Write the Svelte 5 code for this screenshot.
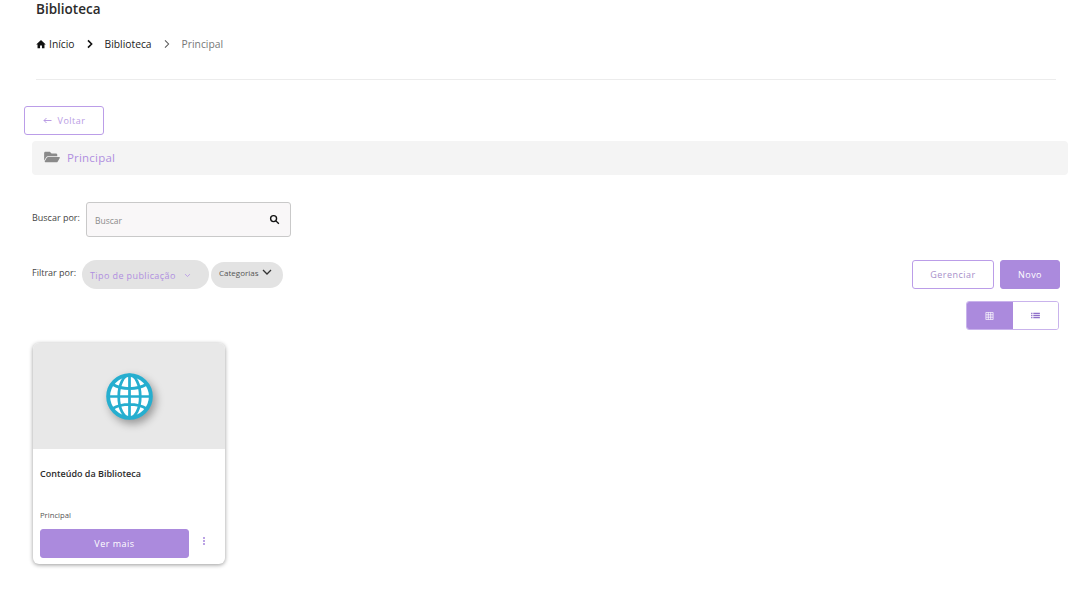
<script lang="ts">
	let search = '';
</script>

<div class="page">
	<header class="top">
		<h1>Biblioteca</h1>
		<nav class="crumbs">
			<svg class="home" viewBox="0 0 24 24"><path d="M12 2.500 0.500 13h3.200v9h6v-6.500h4.600v6.500h6v-9h3.200z" /></svg>
			<span class="crumb first">Início</span>
			<svg class="chev bold" viewBox="0 0 10 12"><path d="M2.500 1.500 7 6l-4.500 4.500" /></svg>
			<span class="crumb">Biblioteca</span>
			<svg class="chev" viewBox="0 0 10 12"><path d="M2.500 1.500 7 6l-4.500 4.500" /></svg>
			<span class="crumb muted">Principal</span>
		</nav>
		<hr />
	</header>

	<button class="btn outline back">
		<svg class="arrow" viewBox="0 0 9 7"><path d="M8.500 3.500H1M3.500 1 1 3.500 3.500 6" /></svg>
		Voltar
	</button>

	<div class="folder-bar">
		<svg class="folder" viewBox="0 0 576 512"><path d="M572.700 292.100 500.300 416.200A64 64 0 0 1 445 448H45c-18.500 0-30.100-20.100-20.800-36.100l72.400-124.100A64 64 0 0 1 151.900 256h400c18.500 0 30.100 20.100 20.800 36.100zM152 224h328v-48c0-26.500-21.500-48-48-48H272l-64-64H48C21.500 64 0 85.500 0 112v278l69.100-118.400C86.200 242.300 118 224 152 224z" /></svg>
		<span>Principal</span>
	</div>

	<div class="search-row">
		<span class="label">Buscar por:</span>
		<div class="search">
			<input placeholder="Buscar" bind:value={search} />
			<svg viewBox="0 0 24 24"><circle cx="10" cy="10" r="6.500" /><path d="m15 15 6.500 6.500" /></svg>
		</div>
	</div>

	<div class="filter-row">
		<span class="label">Filtrar por:</span>
		<div class="pill type">
			Tipo de publicação
			<svg viewBox="0 0 10 6"><path d="m1.500 1 3.500 3.500L8.500 1" /></svg>
		</div>
		<div class="pill cat">
			Categorias
			<svg viewBox="0 0 10 6"><path d="m1 1 4 4 4-4" /></svg>
		</div>
		<div class="actions">
			<button class="btn outline manage">Gerenciar</button>
			<button class="btn solid novo">Novo</button>
		</div>
	</div>

	<div class="toggle-row">
		<div class="toggle">
			<button class="on" aria-label="Grade">
				<svg viewBox="0 0 10 10"><path d="M.500.500h9v9h-9zM3.500.500v9M6.500.500v9M.500 3.500h9M.500 6.500h9" /></svg>
			</button>
			<button aria-label="Lista">
				<svg viewBox="0 0 10 8"><path d="M0 1.500h1.500M0 4h1.500M0 6.500h1.500M2.500 1.500H10M2.500 4H10M2.500 6.500H10" /></svg>
			</button>
		</div>
	</div>

	<article class="card">
		<div class="thumb">
			<svg class="globe" viewBox="0 0 48 48">
				<circle cx="24" cy="24" r="23" fill="#fff" />
				<g fill="none" stroke="#26aecf" stroke-width="2.800">
					<circle cx="24" cy="24" r="21.800" stroke-width="4" />
					<ellipse cx="24" cy="24" rx="11" ry="22" />
					<path d="M24 2v44M2 24h44M6.500 11.500c5 3 10.500 4.400 17.500 4.400s12.500-1.400 17.500-4.400M6.500 36.500c5-3 10.500-4.400 17.500-4.400s12.500 1.400 17.500 4.400" />
				</g>
			</svg>
		</div>
		<div class="body">
			<h2>Conteúdo da Biblioteca</h2>
			<p>Principal</p>
			<div class="foot">
				<button class="btn solid more">Ver mais</button>
				<span class="dots"><i></i><i></i><i></i></span>
			</div>
		</div>
	</article>
</div>

<style>
	:global(body) {
		margin: 0;
		background: #fff;
	}
	.page {
		width: 1092px;
		height: 590px;
		overflow: hidden;
		box-sizing: border-box;
		font-family: "Open Sans", "Noto Sans", sans-serif;
		color: #222;
	}
	.top {
		padding: 0 36px;
	}
	h1 {
		margin: 0;
		height: 16px;
		font-size: 13.500px;
		font-weight: 600;
		color: #2b2b2b;
	}
	.crumbs {
		display: flex;
		align-items: center;
		height: 18px;
		margin-top: 19px;
		font-size: 10.300px;
	}
	.home {
		width: 10px;
		height: 10px;
		fill: #111;
		margin-right: 3px;
	}
	.crumb.first {
		margin-right: 11px;
	}
	.crumb.muted {
		color: #777;
	}
	.chev {
		width: 8px;
		height: 10px;
		margin-right: 11px;
		fill: none;
		stroke: #555;
		stroke-width: 1.300;
	}
	.chev.bold {
		stroke: #111;
		stroke-width: 2;
	}
	.crumb + .chev:not(.bold) {
		margin-left: 11px;
		margin-right: 11px;
	}
	hr {
		border: 0;
		border-top: 1px solid #ececec;
		margin: 26px 0 0;
		width: 1020px;
	}
	.btn {
		font-family: inherit;
		font-size: 9px;
		letter-spacing: 0.5px;
		border-radius: 3px;
		box-sizing: border-box;
		cursor: pointer;
		padding: 0;
	}
	.outline {
		background: #fff;
		border: 1px solid #bb9de8;
		color: #ab8add;
	}
	.solid {
		background: #ab8add;
		border: 1px solid #ab8add;
		color: #fff;
	}
	.back {
		display: flex;
		align-items: center;
		justify-content: center;
		gap: 6px;
		width: 80px;
		height: 29px;
		margin: 26px 0 0 24px;
		color: #b99ce4;
	}
	.arrow {
		width: 9px;
		height: 7px;
		fill: none;
		stroke: #b99ce4;
		stroke-width: 1;
	}
	.folder-bar {
		display: flex;
		align-items: center;
		gap: 7px;
		width: 1036px;
		height: 34px;
		margin: 6px 0 0 32px;
		padding: 0 0 2px 12px;
		box-sizing: border-box;
		background: #f4f4f4;
		border-radius: 4px;
		color: #b08fe0;
		font-size: 11.500px;
		font-weight: 500;
		letter-spacing: 0.2px;
	}
	.folder {
		width: 16px;
		height: 14px;
		fill: #8a8a8a;
	}
	.label {
		font-size: 9px;
		color: #444;
	}
	.search-row {
		display: flex;
		align-items: center;
		margin: 27px 0 0 32px;
	}
	.search-row .label {
		width: 54px;
		margin-top: -4px;
	}
	.search {
		display: flex;
		align-items: center;
		width: 205px;
		height: 35px;
		box-sizing: border-box;
		padding: 0 10px 0 8px;
		background: #f9f7f8;
		border: 1px solid #c9c9c9;
		border-radius: 3px;
	}
	.search input {
		flex: 1;
		min-width: 0;
		border: 0;
		outline: 0;
		background: transparent;
		font-family: inherit;
		font-size: 8.500px;
		padding: 2px 0 0;
	}
	.search input::placeholder {
		color: #8b8b8b;
		opacity: 1;
	}
	.search svg {
		width: 11px;
		height: 11px;
		fill: none;
		stroke: #111;
		stroke-width: 3;
	}
	.filter-row {
		display: flex;
		align-items: center;
		height: 29px;
		margin: 23px 32px 0 32px;
	}
	.filter-row .label {
		width: 50px;
		margin-top: -4px;
	}
	.pill {
		display: flex;
		align-items: center;
		box-sizing: border-box;
		background: #e3e3e3;
		white-space: nowrap;
	}
	.type {
		width: 127px;
		height: 29px;
		border-radius: 15px;
		padding: 1px 0 0 8px;
		color: #b08fe0;
		font-size: 9px;
		letter-spacing: 0.4px;
	}
	.type svg {
		width: 7px;
		height: 5px;
		margin-left: 8px;
		fill: none;
		stroke: #b99ce4;
		stroke-width: 1.300;
	}
	.cat {
		width: 72px;
		height: 26px;
		border-radius: 13px;
		margin-left: 2px;
		padding: 0 0 5px 8px;
		color: #555;
		font-size: 8px;
	}
	.cat svg {
		width: 10px;
		height: 6px;
		margin-left: 3px;
		fill: none;
		stroke: #333;
		stroke-width: 1.300;
	}
	.actions {
		display: flex;
		gap: 6px;
		margin-left: auto;
	}
	.manage {
		width: 82px;
		height: 29px;
		color: #a78fc9;
	}
	.novo {
		width: 60px;
		height: 29px;
	}
	.toggle-row {
		display: flex;
		justify-content: flex-end;
		margin: 12px 33px 0 0;
	}
	.toggle {
		display: flex;
		width: 93px;
		height: 29px;
		box-sizing: border-box;
		border: 1px solid #c9b3ec;
		border-radius: 3px;
		overflow: hidden;
	}
	.toggle button {
		flex: 1;
		display: flex;
		align-items: center;
		justify-content: center;
		padding: 0;
		border: 0;
		background: #fff;
	}
	.toggle button.on {
		background: #ab8add;
	}
	.toggle svg {
		width: 9px;
		height: 7px;
		fill: none;
		stroke: #8f6fc9;
		stroke-width: 1.500;
	}
	.toggle .on svg {
		height: 8px;
		stroke: #fff;
		stroke-width: 0.900;
	}
	.card {
		width: 192px;
		height: 221px;
		margin: 13px 0 0 33px;
		border-radius: 6px;
		background: #fff;
		overflow: hidden;
		box-shadow: 0 1px 4px rgba(0, 0, 0, 0.4);
	}
	.thumb {
		display: flex;
		align-items: center;
		justify-content: center;
		height: 106px;
		padding-top: 1px;
		box-sizing: border-box;
		background: #e8e8e8;
	}
	.globe {
		width: 47px;
		height: 47px;
		filter: drop-shadow(3px 4px 4px rgba(0, 0, 0, 0.35));
	}
	.body {
		padding: 0 7px;
	}
	h2 {
		margin: 18px 0 0;
		font-size: 9px;
		line-height: 14px;
		font-weight: 600;
		color: #2b2b2b;
	}
	.body p {
		margin: 28px 0 0;
		font-size: 7.700px;
		line-height: 12px;
		color: #555;
	}
	.foot {
		display: flex;
		align-items: center;
		margin-top: 8px;
	}
	.more {
		width: 149px;
		height: 29px;
	}
	.dots {
		display: flex;
		flex-direction: column;
		gap: 1px;
		margin: -6px 0 0 14px;
	}
	.dots i {
		width: 2px;
		height: 2px;
		border-radius: 50%;
		background: #a584dc;
	}
</style>
